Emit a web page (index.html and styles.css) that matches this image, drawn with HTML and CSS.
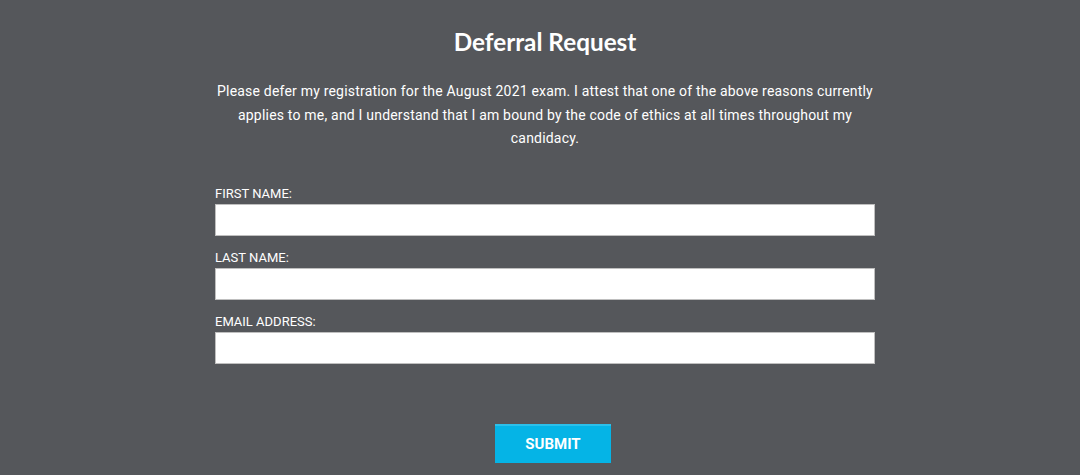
FILE: index.html
```html
<!DOCTYPE html>
<html>
<head>
<meta charset="utf-8">
<link rel="stylesheet" href="styles.css">
</head>
<body>
<main class="page">
  <h1 class="title">Deferral Request</h1>
  <p class="intro">Please defer my registration for the August 2021 exam. I attest that one of the above reasons currently applies to me, and I understand that I am bound by the code of ethics at all times throughout my candidacy.</p>
  <form class="form">
    <label class="field">
      <span class="label">FIRST NAME:</span>
      <input class="input" type="text">
    </label>
    <label class="field">
      <span class="label">LAST NAME:</span>
      <input class="input" type="text">
    </label>
    <label class="field">
      <span class="label">EMAIL ADDRESS:</span>
      <input class="input" type="email">
    </label>
    <div class="actions">
      <button class="submit" type="button">SUBMIT</button>
    </div>
  </form>
</main>
</body>
</html>
```
FILE: styles.css
```css
html, body {
  margin: 0;
  padding: 0;
  background: #55575b;
}
body {
  width: 1080px;
  height: 475px;
  overflow: hidden;
  font-family: Roboto, "Liberation Sans", sans-serif;
  color: #fff;
}
.page {
  width: 660px;
  margin: 0 auto;
  padding: 28px 0 0 10px;
  display: flex;
  flex-direction: column;
  align-items: center;
}
.title {
  font-family: Lato, sans-serif;
  font-weight: 700;
  font-size: 24.3px;
  line-height: 28px;
  margin: 0 0 24px;
}
.intro {
  margin: 0;
  text-align: center;
  font-size: 14px;
  line-height: 23.5px;
  letter-spacing: 0.2px;
}
.form {
  width: 660px;
  margin-top: 35px;
  display: flex;
  flex-direction: column;
  gap: 14px;
}
.field {
  display: flex;
  flex-direction: column;
  gap: 2px;
}
.label {
  font-size: 13px;
  line-height: 16px;
}
.input {
  box-sizing: border-box;
  height: 32px;
  margin: 0;
  border: 1px solid #bfbfbf;
  background: #fff;
  outline: none;
}
.actions {
  display: flex;
  justify-content: center;
  margin-top: 46px;
  padding-left: 16px;
}
.submit {
  width: 116px;
  height: 39px;
  border: 0;
  background: #05b4e6;
  border-top: 2px solid #2cc0ea;
  color: #fff;
  font-family: Roboto, sans-serif;
  font-weight: 700;
  font-size: 15px;
}
```
